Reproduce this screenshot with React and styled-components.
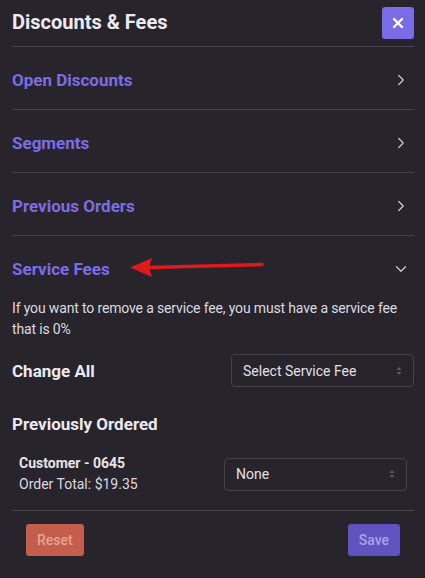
import React from 'react'
import styled, { createGlobalStyle } from 'styled-components'
import { ChevronRight, ChevronDown } from 'lucide-react'

const GlobalStyle = createGlobalStyle`
    body{
        margin: 0;
        background: #27242b;
        font-family: Roboto, "Liberation Sans", sans-serif;
        color: #e6e4ea;
    }
`

const sections = ['Open Discounts', 'Segments', 'Previous Orders']

function App() {
    return (
        <>
            <GlobalStyle />
            <Panel>
                <Header>
                    <Title>Discounts &amp; Fees</Title>
                    <CloseButton aria-label="close">
                        <svg width="12" height="12" viewBox="0 0 12 12">
                            <path d="M2 2 L10 10 M10 2 L2 10" stroke="#fff" strokeWidth="2.4" strokeLinecap="round" />
                        </svg>
                    </CloseButton>
                </Header>
                {sections.map((s) => (
                    <Row key={s}>
                        <SectionName>{s}</SectionName>
                        <ChevronRight size={18} strokeWidth={1.6} color="#cfcdd4" />
                    </Row>
                ))}
                <Row $open>
                    <SectionName>Service Fees</SectionName>
                    <Pointer width="140" height="24" viewBox="0 0 140 24">
                        <path d="M18 12.5 L132 9.5" stroke="#e0191d" strokeWidth="3.5" strokeLinecap="round" />
                        <path d="M0 12.5 L22 3 L19 12.5 L22 22 Z" fill="#e0191d" />
                    </Pointer>
                    <ChevronDown size={18} strokeWidth={1.6} color="#cfcdd4" />
                </Row>
                <Note>If you want to remove a service fee, you must have a service fee that is 0%</Note>
                <ChangeAll>
                    <Label>Change All</Label>
                    <Select $w="183px">
                        <span>Select Service Fee</span>
                        <Caret />
                    </Select>
                </ChangeAll>
                <SubTitle>Previously Ordered</SubTitle>
                <Customer>
                    <div>
                        <CustName>Customer - 0645</CustName>
                        <CustTotal>Order Total: $19.35</CustTotal>
                    </div>
                    <Select $w="183px">
                        <span>None</span>
                        <Caret />
                    </Select>
                </Customer>
                <Footer>
                    <Button $bg="#c45d4b" $fg="#e5a496">Reset</Button>
                    <Button $bg="#6153bf" $fg="#aaa2e6">Save</Button>
                </Footer>
            </Panel>
        </>
    )
}

function Caret() {
    return (
        <svg width="6" height="10" viewBox="0 0 6 10">
            <path d="M0.5 4 L3 1 L5.5 4 Z M0.5 6 L3 9 L5.5 6 Z" fill="#5c5963" />
        </svg>
    )
}

export default App

let Panel = styled.div`
    padding: 0 11px 0 12px;
    box-sizing: border-box;
    width: 425px;
    height: 578px;
    overflow: hidden;
`

let Header = styled.div`
    display: flex;
    justify-content: space-between;
    align-items: center;
    height: 47px;
    border-bottom: 1px solid #46434b;
    box-sizing: border-box;
    padding-top: 2px;
`

let Title = styled.h1`
    margin: 0;
    font-size: 20px;
    font-weight: 700;
    color: #eceaf0;
    margin-top: -4px;
`

let CloseButton = styled.button`
    width: 32px;
    height: 32px;
    border: none;
    border-radius: 3px;
    background: #7a6be6;
    display: flex;
    align-items: center;
    justify-content: center;
    padding: 0;
    margin-top: -3px;
`

let Row = styled.div`
    position: relative;
    display: flex;
    justify-content: space-between;
    align-items: center;
    height: ${(p) => (p.$open ? '62px' : '63px')};
    border-bottom: ${(p) => (p.$open ? 'none' : '1px solid #46434b')};
    box-sizing: border-box;
    padding-right: 4px;
    padding-top: 4px;
`

let SectionName = styled.span`
    font-size: 17px;
    font-weight: 700;
    color: #7b6de4;
`

let Pointer = styled.svg`
    position: absolute;
    left: 118px;
    top: 19px;
`

let Note = styled.p`
    margin: 0;
    font-size: 14px;
    line-height: 21px;
    letter-spacing: -0.15px;
    color: #dcdae0;
`

let ChangeAll = styled.div`
    display: flex;
    justify-content: space-between;
    align-items: center;
    margin-top: 14px;
`

let Label = styled.span`
    font-size: 17px;
    font-weight: 700;
    color: #eceaf0;
`

let Select = styled.div`
    width: ${(p) => p.$w};
    height: 33px;
    box-sizing: border-box;
    border: 1px solid #45424a;
    border-radius: 4px;
    display: flex;
    align-items: center;
    justify-content: space-between;
    padding: 0 11px 0 11px;
    font-size: 14px;
    color: #e2e0e6;
`

let SubTitle = styled.h2`
    margin: 27px 0 0;
    font-size: 17px;
    font-weight: 700;
    color: #eceaf0;
`

let Customer = styled.div`
    display: flex;
    justify-content: space-between;
    align-items: center;
    padding: 19px 7px 15px 7px;
    border-bottom: 1px solid #46434b;
`

let CustName = styled.div`
    font-size: 14px;
    font-weight: 700;
    line-height: 21px;
    color: #e6e4ea;
`

let CustTotal = styled.div`
    font-size: 14px;
    line-height: 21px;
    color: #dcdae0;
`

let Footer = styled.div`
    display: flex;
    justify-content: space-between;
    padding: 13px 14px 0;
`

let Button = styled.button`
    height: 32px;
    padding: 0 11px;
    border: none;
    border-radius: 3px;
    background: ${(p) => p.$bg};
    color: ${(p) => p.$fg};
    font-family: Roboto, "Liberation Sans", sans-serif;
    font-size: 14px;
    font-weight: 500;
`
